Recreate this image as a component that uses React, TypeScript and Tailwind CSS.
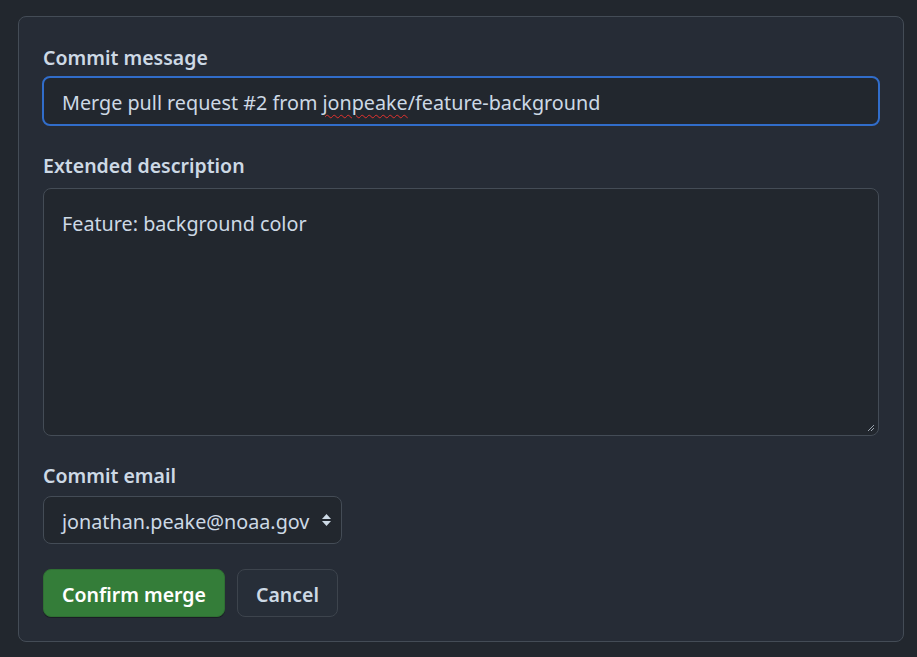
import React from "react";

const font = { fontFamily: '"Noto Sans", "Open Sans", sans-serif' };

function SortIcon() {
  return (
    <svg width="11" height="16" viewBox="0 0 11 16" className="fill-[#cdd9e5]">
      <path d="M5.5 2 10 7H1Z" />
      <path d="M5.5 14 10 9H1Z" />
    </svg>
  );
}

export default function App() {
  return (
    <div
      className="min-h-[657px] w-[917px] bg-[#22272e] pl-[18px] pr-[13px] pt-4"
      style={font}
    >
      <div className="rounded-lg border border-[#444c56] bg-[#262c36] px-6 pb-6 pt-[26px]">
        <label className="block text-[19.5px] font-semibold leading-[30px] text-[#cdd9e5]">
          Commit message
        </label>
        <div className="-mx-px mt-[3px] flex h-[50px] items-center rounded-lg border-2 border-[#316dca] bg-[#22272e] px-[18px] pt-[4px] text-[19.75px] text-[#cdd9e5]">
          Merge pull request #2 from{" "}
          <span className="ml-[5px] underline decoration-[#e5322e] decoration-wavy decoration-1 underline-offset-4">
            jonpeake
          </span>
          /feature-background
        </div>

        <label className="mt-[25px] block text-[19.5px] font-semibold leading-[30px] text-[#cdd9e5]">
          Extended description
        </label>
        <div className="relative mt-[7px] h-[248px] rounded-lg border border-[#444c56] bg-[#22272e] px-[18px] pt-[20px] text-[19.75px] text-[#cdd9e5]">
          Feature: background color
          <svg
            width="8"
            height="8"
            viewBox="0 0 8 8"
            className="absolute bottom-[3px] right-[3px] stroke-[#9aa3ad]"
          >
            <path d="M7 1 1 7M7 4 4 7" strokeWidth="1" />
          </svg>
        </div>

        <label className="mt-[25px] block text-[19.5px] font-semibold leading-[30px] text-[#cdd9e5]">
          Commit email
        </label>
        <div className="mt-[5px] flex h-[48px] w-[299px] items-center justify-between rounded-lg border border-[#444c56] bg-[#22272e] pl-[18px] pr-[9px] text-[19.75px] text-[#cdd9e5]">
          <span className="pt-[3px]">jonathan.peake@noaa.gov</span>
          <SortIcon />
        </div>

        <div className="mt-[25px] flex gap-3">
          <button className="h-[48px] rounded-lg border border-[#2f6f33] bg-[#347d39] px-[18px] pt-[3px] text-[19.5px] font-semibold text-white shadow-[0_1px_0_rgba(0,0,0,0.3)]">
            Confirm merge
          </button>
          <button className="h-[48px] rounded-lg border border-[#3d444d] bg-[#272e38] px-[18px] pt-[3px] text-[19.5px] font-semibold text-[#cdd9e5]">
            Cancel
          </button>
        </div>
      </div>
    </div>
  );
}
